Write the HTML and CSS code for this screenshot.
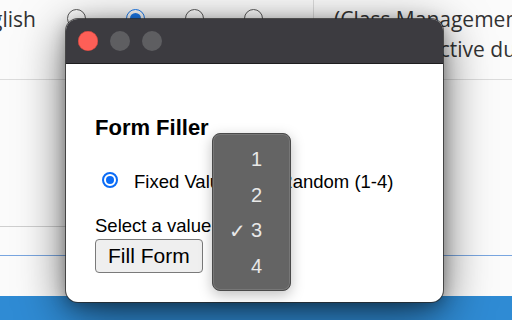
FILE: index.html
```html
<!DOCTYPE html>
<html>
<head>
<meta charset="utf-8">
<link rel="stylesheet" href="styles.css">
</head>
<body>
<div class="desk">
  <div class="bgpage">
    <div class="toprow">
      <div class="lang"><span>English</span></div>
      <div class="opts">
        <span class="bgradio"></span>
        <span class="bgradio on"></span>
        <span class="bgradio"></span>
        <span class="bgradio"></span>
      </div>
      <div class="divider"></div>
      <div class="desc">(Class Management<br>Setting is active during class)</div>
    </div>
    <div class="band1"><div class="rule"></div></div>
    <div class="band2"></div>
    <div class="band3"></div>
    <div class="footer"></div>
  </div>

  <div class="window">
    <div class="titlebar">
      <span class="light red"></span>
      <span class="light"></span>
      <span class="light"></span>
    </div>
    <div class="content">
      <h3 class="title">Form Filler</h3>
      <div class="mode">
        <span class="radio checked"></span>
        <span class="lbl first">Fixed Value</span>
        <span class="radio second"></span>
        <span class="lbl">Random (1-4)</span>
      </div>
      <div class="selrow">Select a value:</div>
      <button class="fill">Fill Form</button>
    </div>
    <div class="menu">
      <div class="item"><span class="check"></span><span class="num">1</span></div>
      <div class="item"><span class="check"></span><span class="num">2</span></div>
      <div class="item"><span class="check">✓</span><span class="num">3</span></div>
      <div class="item"><span class="check"></span><span class="num">4</span></div>
    </div>
  </div>
</div>
</body>
</html>
```

FILE: styles.css
```css
html, body {
  margin: 0;
  padding: 0;
  width: 512px;
  height: 320px;
  overflow: hidden;
  background: #ffffff;
}

.desk {
  position: relative;
  width: 512px;
  height: 320px;
  overflow: hidden;
}

.bgpage {
  display: flex;
  flex-direction: column;
  width: 512px;
  height: 320px;
  background: #fbfbfb;
  font-family: "Open Sans", "DejaVu Sans", sans-serif;
  color: #333333;
}

.toprow {
  display: flex;
  height: 79px;
  border-bottom: 1px solid #dcdcdc;
  flex: none;
}

.lang {
  width: 36px;
  display: flex;
  justify-content: flex-end;
  overflow: hidden;
  font-size: 21px;
  line-height: 30px;
  padding-top: 4px;
  white-space: nowrap;
  flex: none;
}

.opts {
  display: flex;
  gap: 40px;
  margin-left: 31px;
  padding-top: 9px;
  flex: none;
}

.bgradio {
  width: 17px;
  height: 17px;
  border: 1.5px solid #5c5c5c;
  border-radius: 50%;
  background: #ffffff;
  position: relative;
}

.bgradio.on {
  border-color: #1b7cf2;
}

.bgradio.on::after {
  content: "";
  position: absolute;
  left: 3px;
  top: 3px;
  width: 11px;
  height: 11px;
  border-radius: 50%;
  background: #1b7cf2;
}

.divider {
  width: 1px;
  background: #dcdcdc;
  margin-left: 50px;
  flex: none;
}

.desc {
  margin-left: 20px;
  font-size: 21px;
  line-height: 30px;
  padding-top: 4px;
  white-space: nowrap;
}

.band1 {
  height: 147px;
  display: flex;
  align-items: flex-end;
  flex: none;
}

.rule {
  width: 300px;
  height: 1px;
  background: #cfcfcf;
}

.band2 {
  height: 28px;
  border-bottom: 1px solid #79a6e0;
  flex: none;
}

.band3 {
  height: 40px;
  flex: none;
}

.footer {
  flex: 1;
  background: #2f8bd4;
}

/* window */
.window {
  position: absolute;
  left: 66px;
  top: 19px;
  width: 377px;
  height: 283px;
  border-radius: 12px;
  background: #ffffff;
  box-shadow: 0 0 0 1px rgba(40, 40, 40, 0.75), 0 12px 48px rgba(0, 0, 0, 0.6), 0 3px 16px rgba(0, 0, 0, 0.3);
  font-family: "Liberation Sans", Arial, sans-serif;
  color: #000000;
}

.titlebar {
  height: 44px;
  background: #3c3b40;
  border-bottom: 1px solid #1e1e20;
  border-radius: 12px 12px 0 0;
  display: flex;
  align-items: center;
  gap: 12px;
  padding-left: 12px;
}

.light {
  width: 20px;
  height: 20px;
  border-radius: 50%;
  background: #5e5e61;
}

.light.red {
  background: #fd5f57;
  box-shadow: inset 0 0 0 0.5px #c2423a;
}

.content {
  padding: 51px 0 0 29px;
}

.title {
  margin: 0;
  font-size: 22px;
  line-height: 26px;
  font-weight: bold;
}

.mode {
  display: flex;
  align-items: center;
  margin-top: 29px;
  height: 24px;
  font-size: 18.5px;
  line-height: 24px;
}

.radio {
  width: 16px;
  height: 16px;
  box-sizing: border-box;
  border-radius: 50%;
  border: 1px solid #8d8d8d;
  background: #ffffff;
  position: relative;
  margin: -4px 0 0 7px;
  flex: none;
}

.radio.checked {
  border: 2px solid #0b6cf6;
}

.radio.checked::after {
  content: "";
  position: absolute;
  left: 2px;
  top: 2px;
  width: 8px;
  height: 8px;
  border-radius: 50%;
  background: #0b6cf6;
}

.radio.second {
  margin-left: 14px;
  margin-right: 19px;
}

.lbl.first {
  margin-left: 16px;
}

.selrow {
  margin-top: 20px;
  font-size: 18.5px;
  line-height: 24px;
}

.fill {
  margin-top: 1px;
  width: 108px;
  height: 34px;
  padding: 0 0 0 12px;
  text-align: left;
  font-family: "Liberation Sans", Arial, sans-serif;
  font-size: 21px;
  color: #000000;
  background: #efefef;
  border: 1px solid #7a7a7a;
  border-radius: 4px;
}

.menu {
  position: absolute;
  left: 146px;
  top: 114px;
  width: 79px;
  height: 158px;
  box-sizing: border-box;
  padding-top: 8px;
  background: #646464;
  border: 1px solid #4a4a4a;
  border-radius: 8px;
  box-shadow: inset 0 0 0 1px #777777, 0 4px 14px rgba(0, 0, 0, 0.25);
  font-family: "Liberation Sans", Arial, sans-serif;
  color: #e8e8e8;
}

.item {
  height: 35.5px;
  display: flex;
  align-items: center;
  font-size: 20px;
}

.check {
  width: 18px;
  margin-left: 15px;
  font-size: 20px;
  text-align: center;
}

.num {
  margin-left: 5px;
}
```
